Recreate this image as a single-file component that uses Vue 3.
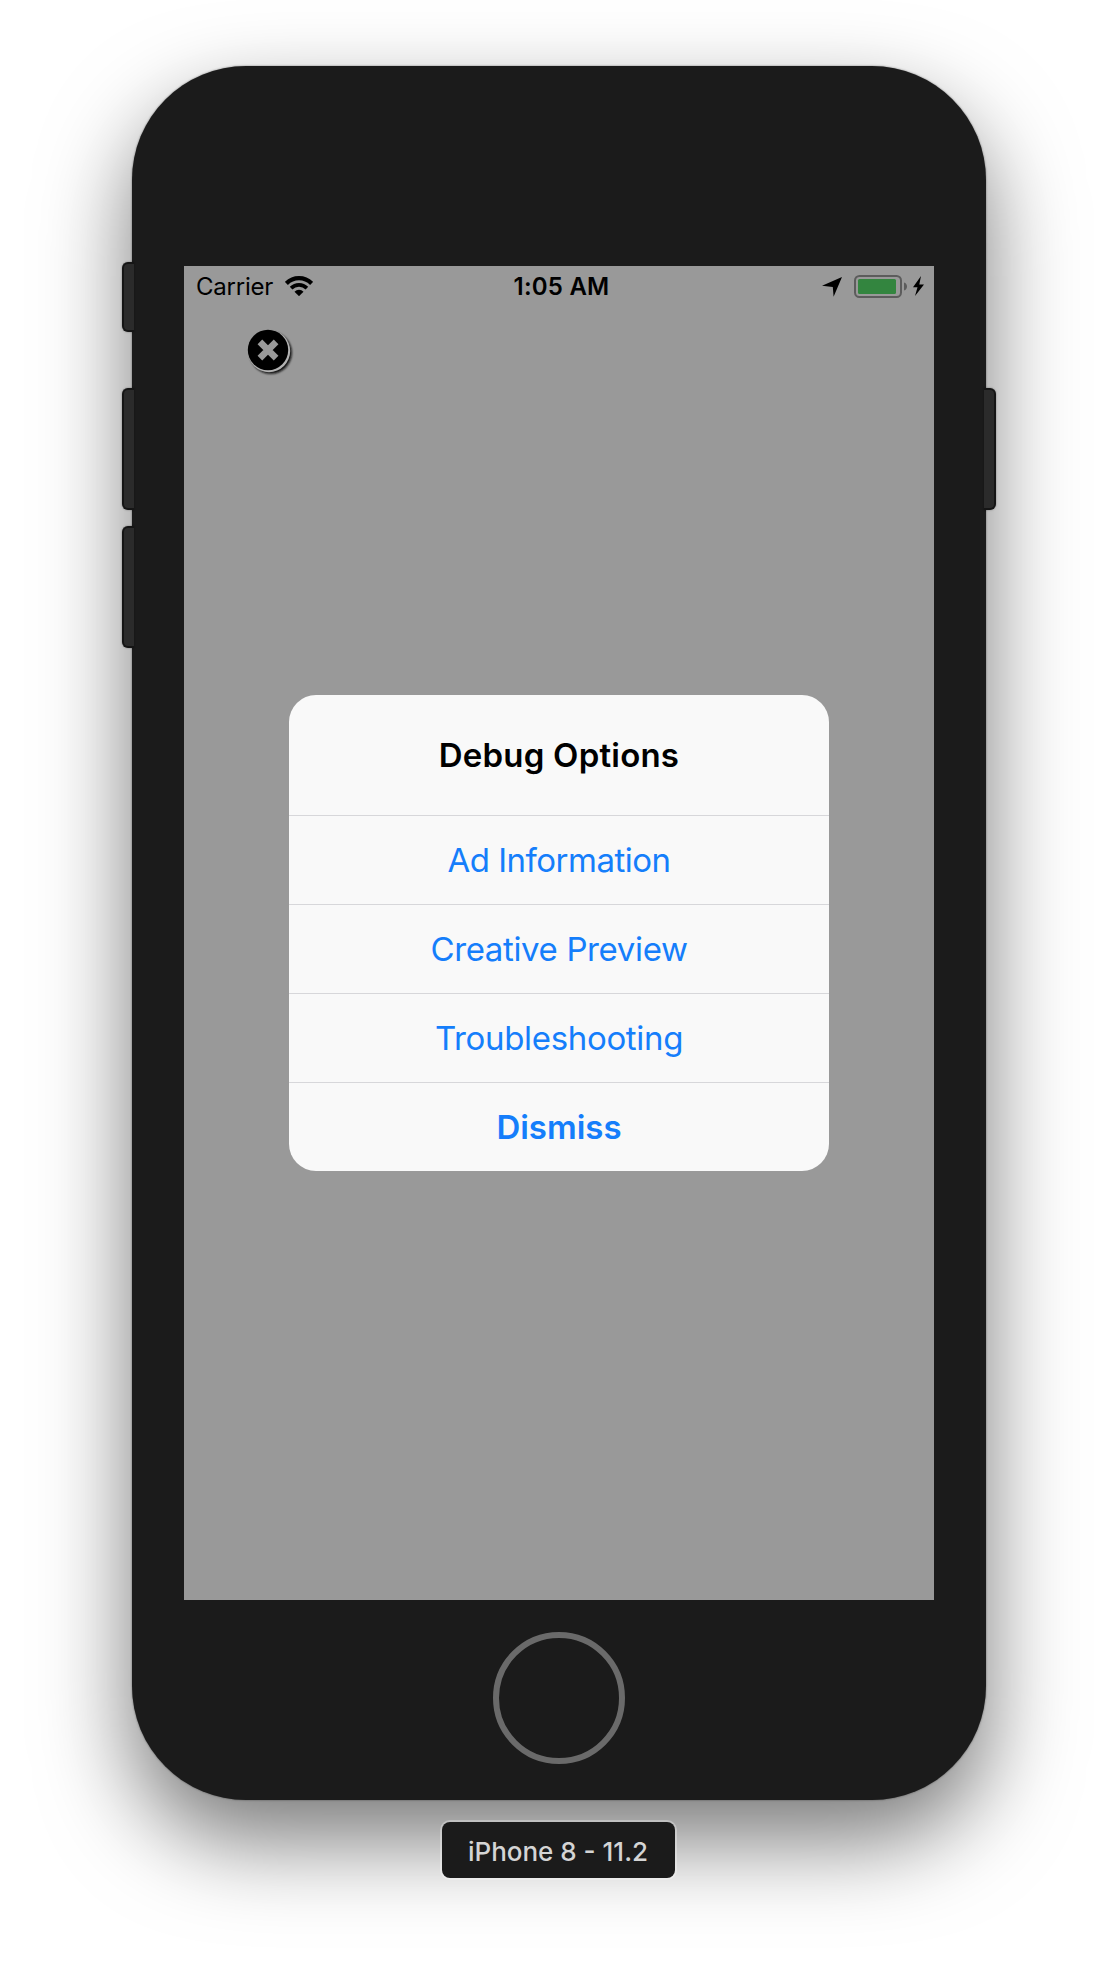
<script setup>
const actions = [
  { label: 'Ad Information', kind: 'info' },
  { label: 'Creative Preview', kind: 'preview' },
  { label: 'Troubleshooting', kind: 'trouble' },
  { label: 'Dismiss', kind: 'bold' },
]
</script>

<template>
  <main class="stage">
    <section class="phone">
      <i class="key mute"></i><i class="key up"></i><i class="key down"></i><i class="key power"></i>
      <div class="screen">
        <header class="status">
          <div class="side">
            <span class="carrier">Carrier</span>
            <svg width="28" height="20" viewBox="0 0 28 20">
              <g fill="none" stroke="#000">
                <path d="M1.4 7.4a17.85 17.85 0 0 1 25.2 0" stroke-width="4.3" />
                <path d="M6.1 12.1a11.2 11.2 0 0 1 15.8 0" stroke-width="3.7" />
              </g>
              <path d="M14 20.2l-4.5-4.5a6.3 6.3 0 0 1 9 0z" />
            </svg>
          </div>
          <span class="time">1:05 AM</span>
          <div class="side right">
            <svg width="102" height="24" viewBox="0 0 102 24">
              <path d="M20 3L11.6 22.8L10.8 13L0 11.7z" />
              <rect x="33" y="2" width="46" height="21" rx="4.5" fill="none" stroke="#5c5c5c" stroke-width="2" />
              <rect x="36" y="5" width="38" height="15" rx="1.5" fill="#33853f" />
              <path d="M82 8.5c4 1 4 7 0 8z" fill="#5c5c5c" />
              <path d="M99 2L91 13.2h4.5L93 22L102 10.6h-4.7z" />
            </svg>
          </div>
        </header>
        <svg class="close" width="52" height="52" viewBox="0 0 52 52">
          <defs><filter id="soft" x="-20%" y="-20%" width="140%" height="140%"><feGaussianBlur stdDeviation="1.1" /></filter></defs>
          <circle cx="26.8" cy="26.8" r="21" fill="#111" filter="url(#soft)" />
          <circle cx="25" cy="25" r="21.2" fill="#b2b2b2" />
          <circle cx="24" cy="24" r="20.2" />
          <path d="M15.9 15.9l16.2 16.2M32.1 15.9L15.9 32.1" stroke="#999" stroke-width="6.6" />
        </svg>
        <div class="alert">
          <h1>Debug Options</h1>
          <button v-for="a in actions" :key="a.kind" :class="a.kind">{{ a.label }}</button>
        </div>
      </div>
      <div class="home"></div>
    </section>
    <div class="label">iPhone 8 - 11.2</div>
  </main>
</template>

<style>
body { margin: 0; background: #fff; }
</style>
<style scoped>
.stage { width: 1118px; height: 1962px; box-sizing: border-box; padding-top: 66px; display: flex; flex-direction: column; align-items: center; font-family: Inter, "Liberation Sans", sans-serif; overflow: hidden; }
.phone { position: relative; flex: none; width: 854px; height: 1734px; box-sizing: border-box; padding-top: 200px; border-radius: 114px; background: #1b1b1b; box-shadow: 0 0 2px rgba(0,0,0,.5), 0 40px 90px rgba(0,0,0,.53); display: flex; flex-direction: column; align-items: center; }
.key { position: absolute; left: -10px; width: 12px; height: 122px; box-sizing: border-box; background: #2b2b2b; border: 2px solid #151515; border-right: 0; border-radius: 6px 0 0 6px; box-shadow: 0 0 2px rgba(0,0,0,.4); }
.mute { top: 196px; height: 70px; }
.up { top: 322px; }
.down { top: 460px; }
.power { top: 322px; left: auto; right: -10px; border: 2px solid #151515; border-left: 0; border-radius: 0 6px 6px 0; }
.screen { position: relative; flex: none; width: 750px; height: 1334px; background: #999; display: flex; align-items: center; justify-content: center; }
.status { position: absolute; top: 0; left: 0; width: 750px; height: 40px; box-sizing: border-box; padding: 0 10px 0 12px; display: flex; align-items: center; font-size: 24px; color: #000; }
.side { flex: 1; display: flex; align-items: center; gap: 12px; }
.carrier { letter-spacing: -.23px; }
.right { justify-content: flex-end; }
.time { font-weight: 600; letter-spacing: .2px; padding-left: 3px; }
.close { position: absolute; left: 60px; top: 60px; }
.alert { width: 540px; height: 476px; border-radius: 27px; background: #f9f9f9; overflow: hidden; display: flex; flex-direction: column; }
h1 { margin: 0; height: 120px; display: flex; align-items: center; justify-content: center; font-size: 33px; font-weight: 600; letter-spacing: .2px; color: #000; }
button { height: 89px; padding: 0; border: 0; border-top: 1px solid #d7d7da; background: none; font-family: inherit; font-size: 33px; color: #157efb; display: flex; align-items: center; justify-content: center; }
.info { letter-spacing: -.5px; }
.preview { letter-spacing: -.37px; }
.trouble { letter-spacing: -.33px; }
.bold { font-weight: 600; }
.home { flex: none; width: 132px; height: 132px; box-sizing: border-box; margin-top: 32px; border: 6px solid #6a6a6a; border-radius: 50%; }
.label { position: relative; flex: none; width: 233px; height: 56px; box-sizing: border-box; margin: 22px 1px 0 0; padding: 2px 1px 0 0; border-radius: 8px; background: #1b1b1b; box-shadow: 0 0 0 2px rgba(255,255,255,.3); display: flex; align-items: center; justify-content: center; color: #d4d4d4; font-size: 26px; font-weight: 500; }
</style>
